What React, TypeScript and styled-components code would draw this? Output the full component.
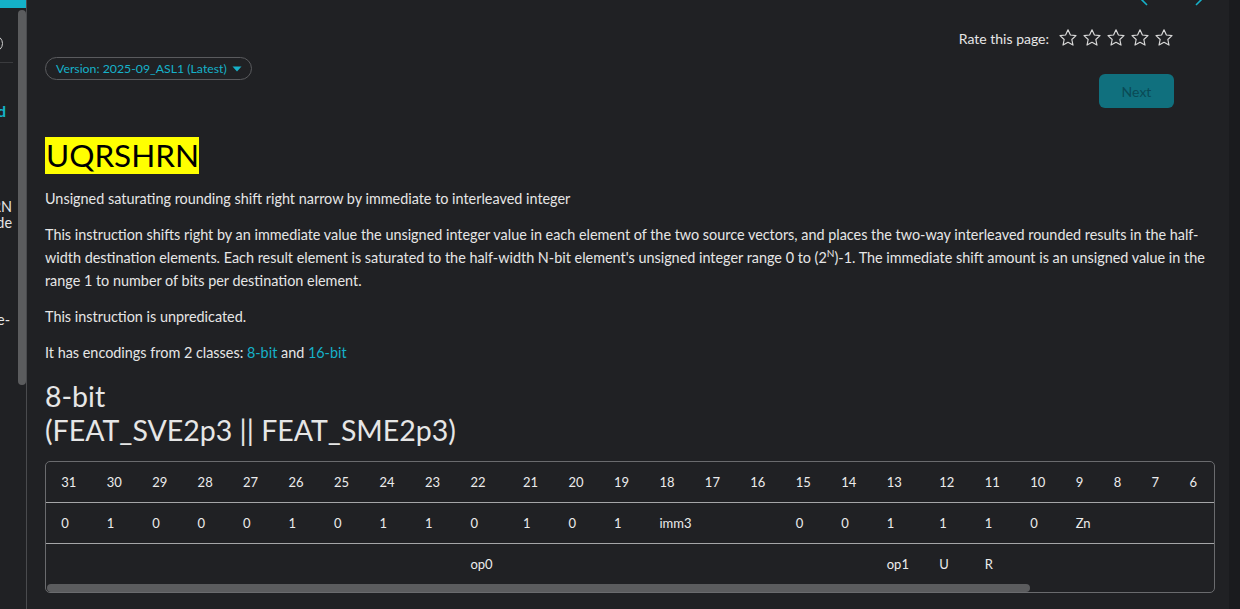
import React from "react";
import styled, { createGlobalStyle } from "styled-components";

const Global = createGlobalStyle`
  html, body { margin: 0; padding: 0; background: #202124; }
  body { font-family: Lato, "Noto Sans", sans-serif; color: #e6e6e6; overflow: hidden; }
  * { box-sizing: border-box; }
`;

const Page = styled.div`
  display: flex;
  width: 1240px;
  height: 609px;
  background: #202124;
  overflow: hidden;
`;

const Sidebar = styled.aside`
  width: 27px;
  flex-shrink: 0;
  display: flex;
  flex-direction: column;
  border-right: 1px solid #4a4b4e;
`;

const SideTopBar = styled.div`
  height: 8px;
  background: #14b1c8;
  flex-shrink: 0;
`;

const SideBody = styled.div`
  display: flex;
  flex: 1;
  min-height: 0;
`;

const SideClip = styled.div`
  width: 18px;
  overflow: hidden;
  display: flex;
  justify-content: flex-end;
`;

const SidePanel = styled.div`
  width: 240px;
  flex-shrink: 0;
  display: flex;
  flex-direction: column;
  align-items: flex-end;
  font-size: 14.4px;
  color: #e6e6e6;
`;

const SideInfo = styled.div`
  margin-top: 27px;
  margin-right: 15px;
  width: 17px;
  height: 17px;
  border: 1.5px solid #d0d0d0;
  border-radius: 50%;
`;

const SideRule = styled.div`
  margin-top: 10px;
  margin-right: 5px;
  width: 200px;
  height: 1px;
  background: #3a3b3e;
`;

const SideLink = styled.div`
  margin-top: 38px;
  margin-right: 12px;
  font-size: 16px;
  font-weight: 700;
  color: #14b1c8;
`;

const SideText = styled.div<{ $top: number; $right: number }>`
  margin-top: ${(p) => p.$top}px;
  margin-right: ${(p) => p.$right}px;
  line-height: 16px;
  text-align: right;
  white-space: nowrap;
`;

const SideScroll = styled.div`
  width: 8px;
  padding-top: 2px;
`;

const SideThumb = styled.div`
  width: 8px;
  height: 375px;
  border-radius: 4px;
  background: #5b5c5e;
`;

const Main = styled.main`
  flex: 1;
  min-width: 0;
  padding: 0 14px 0 18px;
  display: flex;
  flex-direction: column;
`;

const PageScroll = styled.div`
  width: 11px;
  flex-shrink: 0;
  background: #1a1b1e;
`;

const TopNav = styled.div`
  height: 6px;
  overflow: hidden;
  display: flex;
  align-items: flex-end;
  justify-content: flex-end;
  gap: 47px;
  padding-right: 8px;
`;

const Header = styled.div`
  padding-right: 41px;
  display: flex;
  flex-direction: column;
`;

const RatingRow = styled.div`
  margin-top: 24px;
  height: 16px;
  display: flex;
  align-items: center;
  justify-content: flex-end;
  font-size: 14px;
  color: #e6e6e6;
`;

const RateLabel = styled.span`
  margin-right: 9px;
`;

const Stars = styled.div`
  display: flex;
  gap: 4px;
`;

const ActionsRow = styled.div`
  margin-top: 11px;
  display: flex;
  justify-content: space-between;
  align-items: flex-start;
`;

const VersionPill = styled.button`
  height: 23px;
  padding: 0 9px 0 10px;
  border: 1px solid #5a5b5e;
  border-radius: 12px;
  background: transparent;
  color: #16b1c9;
  font-family: Lato, sans-serif;
  font-size: 12.3px;
  display: flex;
  align-items: center;
  gap: 5px;
`;

const NextButton = styled.button`
  margin-top: 17px;
  width: 75px;
  height: 34px;
  border: none;
  border-radius: 6px;
  background: #10707e;
  color: #0a4a55;
  font-family: Lato, sans-serif;
  font-size: 14px;
`;

const Title = styled.h1`
  margin: 29px 0 13px;
  align-self: flex-start;
  background: #ffff00;
  color: #000;
  font-size: 31.5px;
  font-weight: 400;
  line-height: 37px;
  padding: 0 0 0 1px;
`;

const Para = styled.p`
  margin: 0 0 13px;
  font-size: 14.4px;
  line-height: 23px;
  color: #e6e6e6;
`;

const Sup = styled.sup`
  font-size: 10px;
  line-height: 0;
`;

const Link = styled.a`
  color: #16b1c9;
  text-decoration: none;
`;

const SectionHeading = styled.h2`
  margin: 2px 0 14px;
  font-size: 28.5px;
  font-weight: 400;
  line-height: 34px;
  color: #e6e6e6;
`;

const TableFrame = styled.div`
  border: 1px solid #6a6b6e;
  border-radius: 5px;
  overflow: hidden;
`;

const TableClip = styled.div`
  overflow: hidden;
`;

const ScrollTrack = styled.div`
  height: 8px;
  padding-left: 1px;
`;

const ScrollThumb = styled.div`
  height: 8px;
  border-radius: 4px;
  background: #5b5c5e;
`;

const BitTable = styled.table`
  border-collapse: collapse;
  font-size: 13px;
  color: #ececec;
  white-space: nowrap;
`;

const Row = styled.tr<{ $last?: boolean; $h: number }>`
  height: ${(p) => p.$h}px;
  border-bottom: ${(p) => (p.$last ? "none" : "1px solid #a5a6a8")};
`;

const Cell = styled.td`
  padding: 0 15.2px;
  text-align: left;
  vertical-align: middle;
`;

const Chevron = ({ dir }: { dir: "left" | "right" }) => (
  <svg width="12" height="22" viewBox="0 0 12 22">
    <path
      d={dir === "left" ? "M11 1 L1 11 L11 21" : "M1 1 L11 11 L1 21"}
      fill="none"
      stroke="#16b1c9"
      strokeWidth="1.6"
    />
  </svg>
);

const Star = () => (
  <svg width="20" height="20" viewBox="0 0 24 24">
    <path
      d="M12 2.2l2.9 6.2 6.7.8-5 4.6 1.4 6.7L12 17.1l-6 3.4 1.4-6.7-5-4.6 6.7-.8z"
      fill="none"
      stroke="#d8d8d8"
      strokeWidth="1.4"
      strokeLinejoin="round"
    />
  </svg>
);

const Caret = () => (
  <svg width="10" height="6" viewBox="0 0 10 6">
    <path d="M0.5 0.5 L9.5 0.5 L5 5.5 Z" fill="#16b1c9" />
  </svg>
);

const bits = Array.from({ length: 32 }, (_, i) => 31 - i);

type Field = { label: string; span: number };

const valueRow: Field[] = [
  ..."0100010110101".split("").map((b) => ({ label: b, span: 1 })),
  { label: "imm3", span: 3 },
  ...["0", "0", "1", "1", "1", "0"].map((b) => ({ label: b, span: 1 })),
  { label: "Zn", span: 5 },
  { label: "Zd", span: 5 },
];

const nameRow: Field[] = [
  ...Array.from({ length: 9 }, () => ({ label: "", span: 1 })),
  { label: "op0", span: 1 },
  ...Array.from({ length: 8 }, () => ({ label: "", span: 1 })),
  { label: "op1", span: 1 },
  { label: "U", span: 1 },
  { label: "R", span: 1 },
  ...Array.from({ length: 11 }, () => ({ label: "", span: 1 })),
];

export default function App() {
  return (
    <>
      <Global />
      <Page>
        <Sidebar>
          <SideTopBar />
          <SideBody>
            <SideClip>
              <SidePanel>
                <SideInfo />
                <SideRule />
                <SideLink>Unpredicated</SideLink>
                <SideText $top={79} $right={6}>UQRSHRN</SideText>
                <SideText $top={0} $right={6}>narrow by immediate to wide</SideText>
                <SideText $top={81} $right={8}>interleaved single-</SideText>
              </SidePanel>
            </SideClip>
            <SideScroll>
              <SideThumb />
            </SideScroll>
          </SideBody>
        </Sidebar>
        <Main>
          <TopNav>
            <Chevron dir="left" />
            <Chevron dir="right" />
          </TopNav>
          <Header>
            <RatingRow>
              <RateLabel>Rate this page:</RateLabel>
              <Stars>
                <Star />
                <Star />
                <Star />
                <Star />
                <Star />
              </Stars>
            </RatingRow>
            <ActionsRow>
              <VersionPill>
                Version: 2025-09_ASL1 (Latest)
                <Caret />
              </VersionPill>
              <NextButton>Next</NextButton>
            </ActionsRow>
          </Header>
          <Title>UQRSHRN</Title>
          <Para>Unsigned saturating rounding shift right narrow by immediate to interleaved integer</Para>
          <Para>
            This instruction shifts right by an immediate value the unsigned integer value in each element of the two
            source vectors, and places the two-way interleaved rounded results in the half-width destination elements.
            Each result element is saturated to the half-width N-bit element's unsigned integer range 0 to (2
            <Sup>N</Sup>)-1. The immediate shift amount is an unsigned value in the range 1 to number of bits per
            destination element.
          </Para>
          <Para>This instruction is unpredicated.</Para>
          <Para>
            It has encodings from 2 classes: <Link href="#">8-bit</Link> and <Link href="#">16-bit</Link>
          </Para>
          <SectionHeading>
            8-bit
            <br />
            (FEAT_SVE2p3 || FEAT_SME2p3)
          </SectionHeading>
          <TableFrame>
            <TableClip>
              <BitTable>
                <tbody>
                  <Row $h={40}>
                    {bits.map((b) => (
                      <Cell key={b}>{b}</Cell>
                    ))}
                  </Row>
                  <Row $h={41}>
                    {valueRow.map((f, i) => (
                      <Cell key={i} colSpan={f.span}>
                        {f.label}
                      </Cell>
                    ))}
                  </Row>
                  <Row $h={41} $last>
                    {nameRow.map((f, i) => (
                      <Cell key={i} colSpan={f.span}>
                        {f.label}
                      </Cell>
                    ))}
                  </Row>
                </tbody>
              </BitTable>
            </TableClip>
            <ScrollTrack>
              <ScrollThumb style={{ width: 983 }} />
            </ScrollTrack>
          </TableFrame>
        </Main>
        <PageScroll />
      </Page>
    </>
  );
}
